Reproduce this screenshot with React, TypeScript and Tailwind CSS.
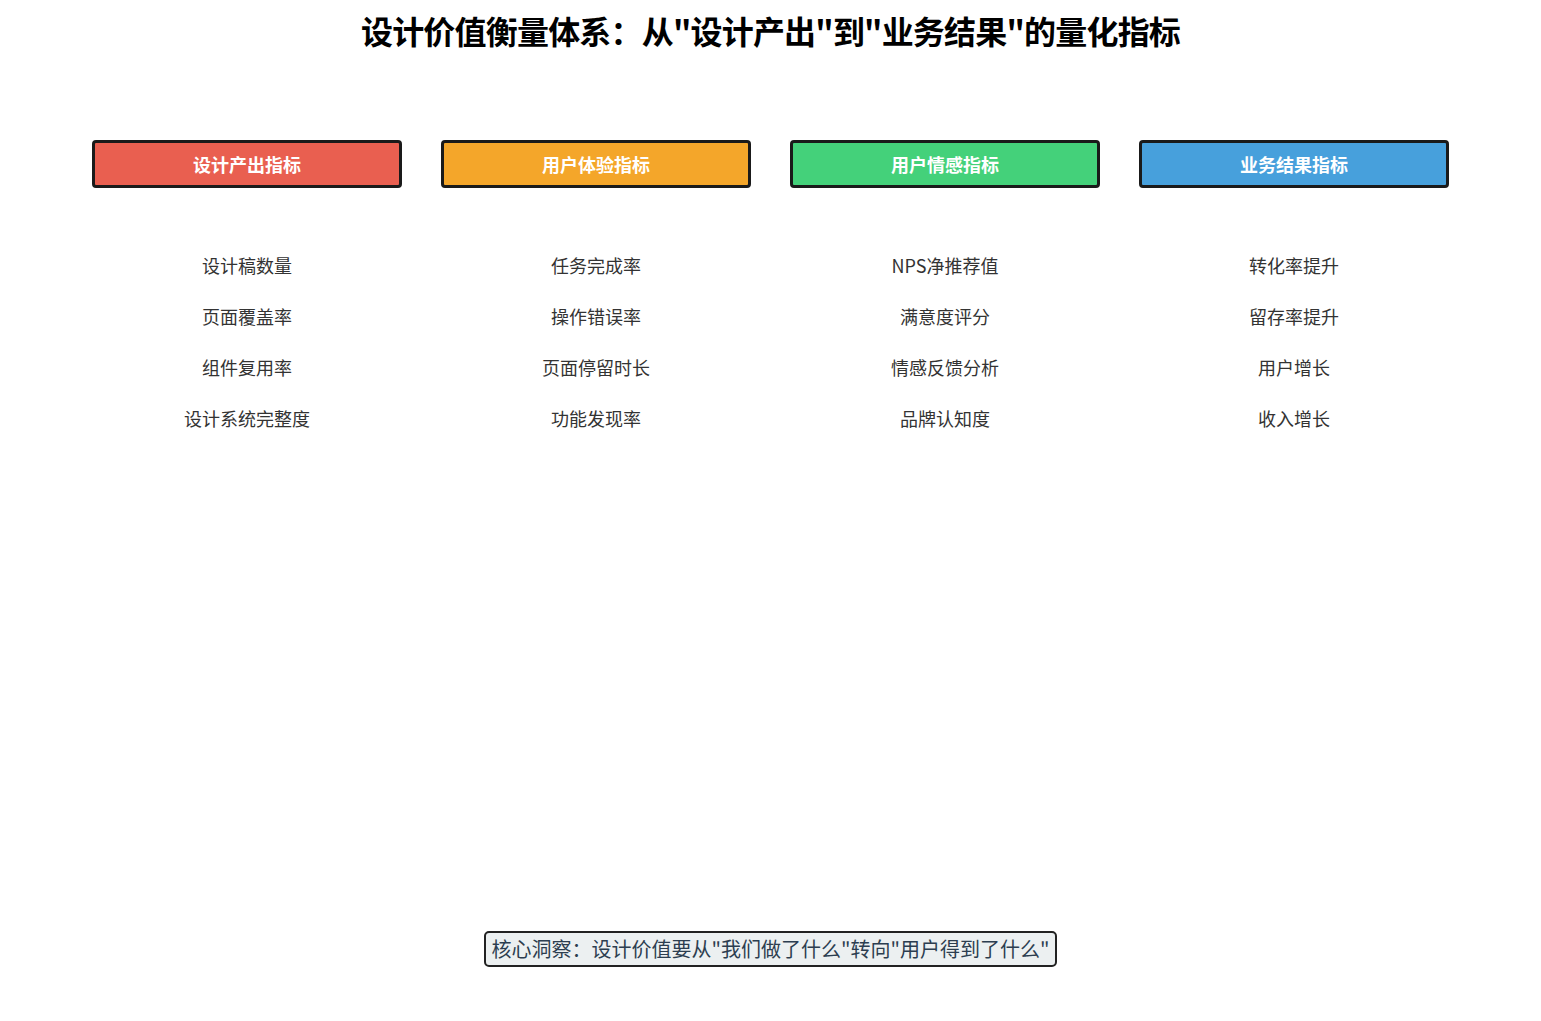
const font = { fontFamily: '"Noto Sans CJK SC", "Noto Sans", sans-serif' };

const columns = [
  { title: '设计产出指标', color: 'bg-[#e95f50]', items: ['设计稿数量', '页面覆盖率', '组件复用率', '设计系统完整度'] },
  { title: '用户体验指标', color: 'bg-[#f4a62a]', items: ['任务完成率', '操作错误率', '页面停留时长', '功能发现率'] },
  { title: '用户情感指标', color: 'bg-[#44d17a]', items: ['NPS净推荐值', '满意度评分', '情感反馈分析', '品牌认知度'] },
  { title: '业务结果指标', color: 'bg-[#47a0dc]', items: ['转化率提升', '留存率提升', '用户增长', '收入增长'] },
];

export default function App() {
  return (
    <main className="w-[1541px] h-[1021px] bg-white flex flex-col" style={font}>
      <h1 className="text-center text-[32px] font-bold text-black mt-[8px] leading-[44px] tracking-tight">
        设计价值衡量体系：从"设计产出"到"业务结果"的量化指标
      </h1>

      <section className="flex gap-[39px] pl-[92px] mt-[88px]">
        {columns.map((c) => (
          <div key={c.title} className="w-[310px] flex flex-col items-center">
            <div className={`w-full h-[48px] ${c.color} border-[3px] border-[#1a1a1a] rounded-[4px] flex items-center justify-center text-white font-bold text-[18px]`}>
              {c.title}
            </div>
            <ul className="mt-[64px] flex flex-col gap-[25px] text-[18px] text-[#333] leading-[26px] text-center">
              {c.items.map((i) => (
                <li key={i}>{i}</li>
              ))}
            </ul>
          </div>
        ))}
      </section>

      <div className="flex-1" />
      <div className="flex justify-center mb-[54px]">
        <div className="bg-[#ecf0f1] border-2 border-[#222] rounded-[5px] px-[6px] h-[36px] flex items-center text-[20px] text-[#2c3e50]">
          核心洞察：设计价值要从"我们做了什么"转向"用户得到了什么"
        </div>
      </div>
    </main>
  );
}
